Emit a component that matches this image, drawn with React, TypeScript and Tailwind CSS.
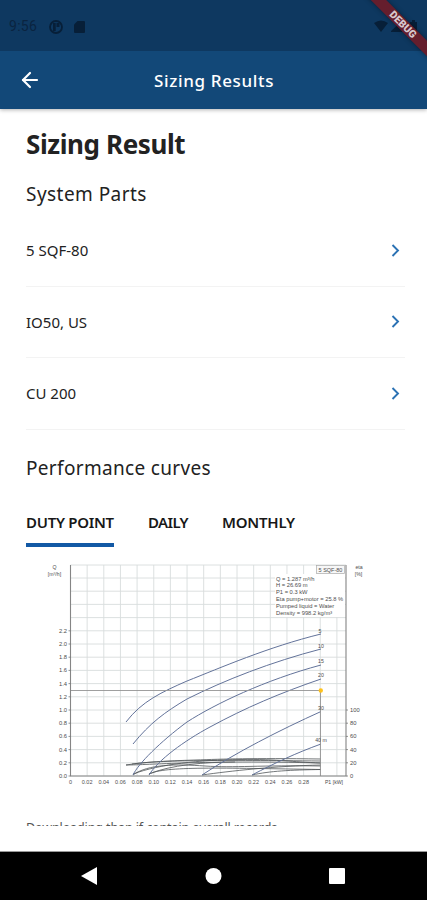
import { ArrowLeft } from "lucide-react";

const parts = ["5 SQF-80", "IO50, US", "CU 200"];

const curves = [
  "M126 722 C142 701 162 692 187 681 C220 668 268 647 321 634",
  "M133 744 C150 723 165 712 187 699 C225 680 271 662 321 649",
  "M133 775 C138 764 160 742 187 722 C215 704 265 680 321 665",
  "M149 775 C158 760 184 741 210 727 C245 708 280 693 321 679",
  "M202 775 C235 753 280 730 321 711.500",
  "M252 775 C275 763 296 753 321 744",
];

const powerLines = [
  "M126 765 C145 762 165 761 195 760 S250 758 321 759",
  "M132 764 C160 760 220 760 321 761",
  "M126 765 C150 765 200 760 321 763",
  "M133 775 C148 764 176 764 205 766 S260 765 321 766",
  "M149 774 C165 766 220 768 321 769.500",
  "M133 774 C160 764 200 760 240 759.500 S290 762 321 763",
  "M149 774 C170 765 205 762 235 762",
  "M202 775 C230 771 275 766 321 765",
  "M252 775 C270 771 290 770 321 769.500",
];

const info = [
  "Q = 1.287 m³/h",
  "H = 26.69 m",
  "P1 = 0.3 kW",
  "Eta pump+motor = 25.8 %",
  "Pumped liquid = Water",
  "Density = 998.2 kg/m³",
];

const curveLabels: [string, number, number][] = [
  ["5", 320, 633],
  ["10", 321, 648],
  ["15", 321, 663],
  ["20", 321, 677],
  ["30", 321, 710],
  ["40 m", 321, 742],
];

function Chart() {
  return (
    <svg
      className="block h-[235px] w-full font-['Liberation_Sans',sans-serif]"
      viewBox="0 555 427 235"
      fill="none"
    >
      <g stroke="#d8dddd" strokeWidth="0.9">
        {Array.from({ length: 17 }, (_, i) => (
          <path key={`v${i}`} d={`M${70.5 + i * 16.65} 565V776`} />
        ))}
        {Array.from({ length: 16 }, (_, i) => (
          <path key={`h${i}`} d={`M70.500 ${776 - i * 13.2}H346`} />
        ))}
        <path d="M70.500 565H346" />
      </g>
      <rect x="275" y="574" width="70" height="43" fill="#fff" />
      <rect x="316.500" y="565.500" width="28" height="8" fill="#f7f7f7" stroke="#aaa" strokeWidth="0.700" />
      <g strokeWidth="0.8">
        {powerLines.map((d) => (
          <path key={d} d={d} stroke="#505558" />
        ))}
      </g>
      <g stroke="#63739a" strokeWidth="1">
        {curves.map((d) => (
          <path key={d} d={d} />
        ))}
      </g>
      <path d="M70.500 690.500H321M320.500 690V776" stroke="#949494" strokeWidth="0.900" />
      <path d="M70.500 565V776H346V565" stroke="#858585" strokeWidth="1.100" />
      <circle cx="320.800" cy="690.500" r="2.200" fill="#ffc21c" />
      <g fill="#4d4d4d" fontSize="5.200">
        <text x="54.500" y="569" textAnchor="middle">Q</text>
        <text x="54.500" y="575.500" textAnchor="middle">[m³/h]</text>
        {Array.from({ length: 12 }, (_, i) => (
          <g key={i}>
            <path d={`M68.500 ${776 - i * 13.2}h2`} stroke="#777" strokeWidth="0.800" />
            <text x="67" y={778 - i * 13.2} textAnchor="end" fontSize="5.800">
              {(i * 0.2).toFixed(1)}
            </text>
          </g>
        ))}
        {Array.from({ length: 15 }, (_, i) => (
          <text key={i} x={70.5 + i * 16.65} y="784" textAnchor="middle" fontSize="5.500">
            {i === 0 ? "0" : (i * 0.02).toFixed(2)}
          </text>
        ))}
        <text x="334" y="784" textAnchor="middle">P1 [kW]</text>
        {[0, 20, 40, 60, 80, 100].map((n) => (
          <g key={n}>
            <path d={`M346 ${776 - n * 0.66}h2`} stroke="#777" strokeWidth="0.800" />
            <text x="350" y={778 - n * 0.66} fontSize="5.800">{n}</text>
          </g>
        ))}
        <text x="359" y="569" textAnchor="middle">eta</text>
        <text x="358.500" y="575.500" textAnchor="middle">[%]</text>
        <text x="330.500" y="571.500" textAnchor="middle" fontSize="5.500">5 SQF-80</text>
        {info.map((line, i) => (
          <text key={line} x="276" y={580.5 + i * 6.9} fontSize="5.750">{line}</text>
        ))}
        {curveLabels.map(([label, x, y]) => (
          <text key={label} x={x} y={y} textAnchor="middle">{label}</text>
        ))}
      </g>
    </svg>
  );
}

export default function App() {
  return (
    <div className="relative flex h-[900px] w-[427px] flex-col overflow-hidden bg-white font-['Noto_Sans',sans-serif] text-[#222]">
      <header className="shrink-0 text-white shadow-[0_1px_4px_rgba(0,0,0,0.3)]">
        <div className="flex h-[51px] items-center bg-[#0e3860] pt-[2px] pl-[9px] text-[#0a2440]">
          <span className="w-[40px] font-['Roboto',sans-serif] text-[14px] tracking-[0.300px]">9:56</span>
          <svg className="h-[14px] w-[14px]" viewBox="0 0 14 14">
            <circle cx="7" cy="7" r="6" fill="none" stroke="#071f38" strokeWidth="1.800" />
            <path d="M4 3h2.700v8H4zM7.500 3h3v4h-3z" fill="#071f38" />
          </svg>
          <svg className="ml-[11px] h-[12px] w-[11px]" viewBox="0 0 11 12">
            <path d="M3.500 0H10q1 0 1 1v10q0 1-1 1H1q-1 0-1-1V3.500z" fill="#071f38" />
          </svg>
          <svg className="ml-auto mr-2 h-[13px] w-[45px]" viewBox="0 0 45 13" fill="#071f38">
            <path d="M0 3Q7-2 14 3L7 12zM17 12V11L28 1V12zM36 2h2V0h3v2h2v10h-7z" />
          </svg>
        </div>
        <div className="flex h-[58px] items-center bg-[#124878]">
          <ArrowLeft className="ml-[18px] h-6 w-6" strokeWidth={2.2} />
          <h1 className="mt-[2px] ml-[112px] text-[17px] font-medium tracking-[0.650px]">Sizing Results</h1>
        </div>
      </header>

      <main className="flex h-[717px] shrink-0 flex-col overflow-hidden">
        <h2 className="mt-[17px] ml-[26px] shrink-0 text-[26px] leading-[36px] font-bold tracking-[-0.400px]">Sizing Result</h2>
        <h3 className="mt-[18px] ml-[26px] shrink-0 text-[19px] leading-[28px] tracking-[0.450px]">System Parts</h3>
        <ul className="mt-[7px] mr-[22px] ml-[26px] shrink-0">
          {parts.map((part) => (
            <li key={part} className="flex h-[71.600px] items-center justify-between border-b border-[#f3f3f3] text-[15px]">
              <span>{part}</span>
              <svg className="mr-[5px] h-[13px] w-[9px]" viewBox="0 0 9 13" fill="none">
                <path d="M1.500 1L7 6.500L1.500 12" stroke="#2b72b4" strokeWidth="1.900" />
              </svg>
            </li>
          ))}
        </ul>
        <h3 className="mt-[24px] ml-[26px] shrink-0 text-[19px] leading-[28px] tracking-[0.330px]">Performance curves</h3>
        <nav className="mt-[21px] ml-[26px] flex h-[44px] shrink-0 gap-[34px] text-[15px] font-semibold text-[#181818]">
          <button className="h-full border-b-[4px] border-[#1259a5] pb-[2px] tracking-[-0.280px]">DUTY POINT</button>
          <button className="h-full border-b-[4px] border-transparent pb-[2px] tracking-[-0.600px]">DAILY</button>
          <button className="h-full border-b-[4px] border-transparent pb-[2px] tracking-[-0.200px]">MONTHLY</button>
        </nav>
        <div className="mt-[8px] shrink-0"><Chart /></div>
        <p className="mt-[27px] ml-[26px] shrink-0 text-[12.500px] leading-[22px] tracking-[-0.110px] whitespace-nowrap text-[#555]">
          Downloading than if contain overall records
        </p>
      </main>

      <footer className="mt-auto grid h-[49px] shrink-0 grid-cols-3 place-items-center border-t border-[#999] bg-black">
        <svg className="h-[18px] w-[18px] translate-x-[18px]" viewBox="0 0 18 18"><path d="M1 9L17 0V18z" fill="#fff" /></svg>
        <span className="h-4 w-4 translate-x-[0.500px] rounded-full bg-white" />
        <span className="h-4 w-4 -translate-x-[19px] rounded-[1px] bg-white" />
      </footer>

      <div className="absolute top-[19px] right-[-41px] flex h-[11px] w-[130px] rotate-45 items-center justify-center bg-[#651e2d] font-['Roboto',sans-serif] text-[10.500px] font-black text-[#d8c9ce] shadow-[0_0_5px_rgba(0,0,0,0.4)]">
        DEBUG
      </div>
    </div>
  );
}
